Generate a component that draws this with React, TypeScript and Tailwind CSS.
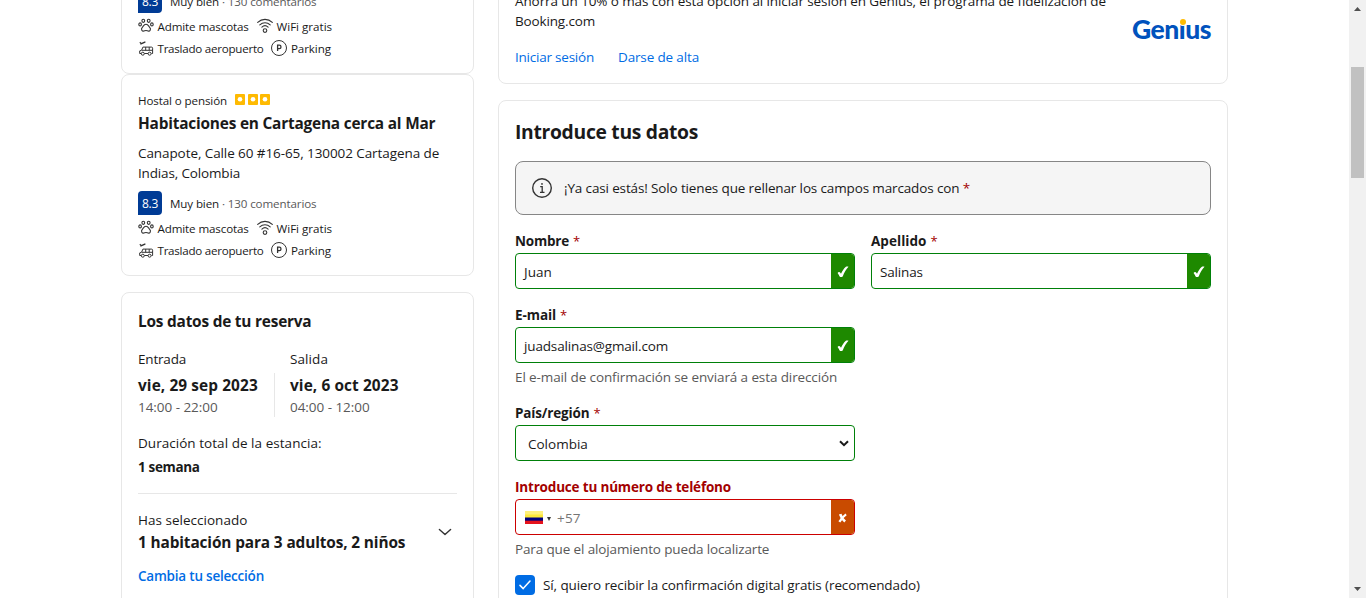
import { ReactNode } from "react";

function PawIcon() {
  return (
    <svg viewBox="0 0 16 16" className="size-4 shrink-0" fill="none" stroke="#333" strokeWidth="1.1">
      <ellipse cx="5.3" cy="2.8" rx="1.4" ry="1.6" />
      <ellipse cx="10.7" cy="2.8" rx="1.4" ry="1.6" />
      <ellipse cx="2.1" cy="6.4" rx="1.3" ry="1.5" />
      <ellipse cx="13.9" cy="6.4" rx="1.3" ry="1.5" />
      <path d="M8 6.3c-1.800 0-2.500 1.500-3.500 2.800-.9 1-1.300 1.900-.8 2.900.6 1.200 2 1.300 3 .8.9-.4 1.700-.4 2.600 0 1 .5 2.400.4 3-.8.5-1 .1-1.900-.8-2.900C10.500 7.800 9.800 6.300 8 6.300z" />
    </svg>
  );
}

function WifiIcon() {
  return (
    <svg viewBox="0 0 16 16" className="size-4 shrink-0" fill="none" stroke="#333" strokeWidth="1.1" strokeLinecap="round">
      <path d="M.7 4.400C5 .4 11 .4 15.300 4.400M2.800 6.800c3-2.800 7.400-2.800 10.400 0M4.900 9.100c1.800-1.700 4.400-1.700 6.200 0" />
      <circle cx="8" cy="12.600" r="1.800" />
    </svg>
  );
}

function ShuttleIcon() {
  return (
    <svg viewBox="0 0 16 16" className="size-4 shrink-0" fill="none" stroke="#333" strokeWidth="1">
      <path d="M1.800 1.300l1.500 1.300L7.400.9M2.400 3.300l4.600-2.200" strokeWidth="1.200" />
      <path d="M3.200 12.500H1.700V9.900l1.900-.7 1.300-3.100h8.600c.7 0 1.100.4 1.100 1.100v5.300h-1.100M6.400 12.500h3.600M3.800 9.300h10.700M7.700 6.100v3.200M11.200 6.100v3.200" />
      <circle cx="4.800" cy="12.700" r="1.500" />
      <circle cx="11.600" cy="12.700" r="1.500" />
    </svg>
  );
}

function ParkingIcon() {
  return (
    <svg viewBox="0 0 16 16" className="size-4 shrink-0" fill="none" stroke="#333">
      <circle cx="8" cy="8" r="7.500" strokeWidth="1" />
      <path d="M6.600 11V5.200h1.700a1.700 1.700 0 0 1 0 3.400H6.600" strokeWidth="1.300" />
    </svg>
  );
}

function Square() {
  return (
    <svg viewBox="0 0 10 11" className="h-[11px] w-[10px]">
      <rect width="10" height="11" rx="1" fill="#feba02" />
      <circle cx="5" cy="5.300" r="2.300" fill="#fff" />
    </svg>
  );
}

function PropertyCard() {
  return (
    <section className="flex h-[202px] shrink-0 flex-col rounded-lg border border-[#e7e7e7] px-4 pt-[17px] text-[#1a1a1a]">
      <div className="flex items-center text-[11.6px] leading-[17px]">
        <span className="w-[97px] tracking-[-0.112px]">Hostal o pensión</span>
        <span className="mb-[2px] flex gap-[2.500px]">
          <Square />
          <Square />
          <Square />
        </span>
      </div>
      <h2 className="mt-[3px] text-[15.4px] leading-[23px] font-bold tracking-[-0.2px] whitespace-nowrap">
        Habitaciones en Cartagena cerca al Mar
      </h2>
      <p className="mt-2 text-[13.5px] leading-5 whitespace-nowrap">
        <span className="tracking-[-0.085px]">Canapote, Calle 60 #16-65, 130002 Cartagena de</span>
        <br />
        <span className="tracking-[-0.155px]">Indias, Colombia</span>
      </p>
      <div className="mt-2 flex h-6 items-center gap-2 text-[11.6px]">
        <span className="flex size-6 items-center justify-center rounded-t-[4px] rounded-br-[4px] bg-[#003b95] pt-px text-[12px] font-medium tracking-[-0.3px] text-white">
          8.3
        </span>
        <span className="leading-[17px] tracking-[-0.12px] whitespace-nowrap">
          Muy bien <span className="text-[#595959]">· 130 comentarios</span>
        </span>
      </div>
      <ul className="mt-[3px] text-[11.6px] leading-[22px] whitespace-nowrap">
        <li className="flex">
          <span className="flex w-[119px] gap-[3.500px]">
            <span className="mt-[2px]"><PawIcon /></span>
            <span className="tracking-[-0.12px]">Admite mascotas</span>
          </span>
          <span className="flex gap-[3.500px]">
            <span className="mt-[2px]"><WifiIcon /></span>
            <span>WiFi gratis</span>
          </span>
        </li>
        <li className="flex">
          <span className="flex w-[133px] gap-[3.500px]">
            <span className="mt-[3px]"><ShuttleIcon /></span>
            <span className="tracking-[-0.251px]">Traslado aeropuerto</span>
          </span>
          <span className="flex gap-[4px]">
            <span className="mt-[2px]"><ParkingIcon /></span>
            <span className="tracking-[-0.1px]">Parking</span>
          </span>
        </li>
      </ul>
    </section>
  );
}

function BookingDetails() {
  return (
    <section className="mt-4 flex h-[340px] shrink-0 flex-col rounded-lg border border-[#e7e7e7] px-4 pt-[17px] text-[13.5px] leading-5 whitespace-nowrap text-[#1a1a1a]">
      <h2 className="text-[15.4px] leading-[23px] font-bold tracking-[-0.21px]">Los datos de tu reserva</h2>
      <div className="mt-4 flex">
        <div className="w-[152px]">
          <p className="font-medium tracking-[-0.196px]">Entrada</p>
          <div className="mt-1 h-11 w-[137px] border-r border-[#e7e7e7] pt-px">
            <p className="text-[15.4px] leading-[23px] font-bold tracking-[0.1px]">vie, 29 sep 2023</p>
            <p className="tracking-[-0.05px] text-[#595959]">14:00 - 22:00</p>
          </div>
        </div>
        <div>
          <p className="font-medium tracking-[0.087px]">Salida</p>
          <div className="mt-1 pt-px">
            <p className="text-[15.4px] leading-[23px] font-bold tracking-[0.1px]">vie, 6 oct 2023</p>
            <p className="tracking-[-0.05px] text-[#595959]">04:00 - 12:00</p>
          </div>
        </div>
      </div>
      <p className="mt-4 font-medium tracking-[0.04px]">Duración total de la estancia:</p>
      <p className="mt-1 font-bold tracking-[-0.35px]">1 semana</p>
      <hr className="mt-4 border-[#e7e7e7]" />
      <div className="mt-4 flex items-center justify-between">
        <div>
          <p className="font-medium tracking-[0.02px]">Has seleccionado</p>
          <p className="mt-px text-[15.4px] leading-[23px] font-bold tracking-[-0.13px]">
            1 habitación para 3 adultos, 2 niños
          </p>
        </div>
        <svg viewBox="0 0 14 8" className="mr-[5px] h-2 w-[14px]" fill="none" stroke="#333" strokeWidth="1.400" strokeLinecap="round" strokeLinejoin="round">
          <path d="M1.400 1.400L7 6.600l5.600-5.200" />
        </svg>
      </div>
      <a className="mt-3 font-semibold tracking-[-0.215px] text-[#006ce4]">Cambia tu selección</a>
    </section>
  );
}

function Label({ children }: { children: ReactNode }) {
  return (
    <div className="flex gap-1 font-bold">
      {children}
      <span className="text-[13px] font-medium text-[#a30000]">*</span>
    </div>
  );
}

function ValidInput({ children }: { children: ReactNode }) {
  return (
    <div className="mt-[2px] flex h-9 overflow-hidden rounded-[4px] border border-[#008009]">
      <div className="flex flex-1 items-center pt-px pl-2">{children}</div>
      <div className="flex w-[23px] items-center justify-center bg-[#1e8900] pt-[2px]">
        <svg viewBox="0 0 12 12" className="size-3" fill="#fff">
          <path d="M.6 7c.5-1 2-1.300 2.700-.3l.7 1C5.300 4.800 6.800 2.500 8.600.9c.6-.5 2.300-.5 2.900-.2C9.200 3.200 7.200 6.500 5.800 10.200c-.4 1-2.700 1.200-3.200.2C2 9.200 1.500 8.200.6 7z" />
        </svg>
      </div>
    </div>
  );
}

function GeniusBanner() {
  return (
    <section className="mt-[-26px] flex h-[110px] shrink-0 justify-between rounded-lg border border-[#e7e7e7] px-4 pt-4 whitespace-nowrap">
      <div>
        <p>
          <span className="tracking-[-0.101px]">
            Ahorra un 10% o más con esta opción al iniciar sesión en Genius, el programa de fidelización de
          </span>
          <br />
          <span className="tracking-[-0.155px]">Booking.com</span>
        </p>
        <div className="mt-4 flex text-[#006ce4]">
          <a className="w-[103px] tracking-[-0.222px]">Iniciar sesión</a>
          <a className="tracking-[-0.147px]">Darse de alta</a>
        </div>
      </div>
      <div className="relative mt-[22px] h-8 w-[79px] font-[Lato,sans-serif] text-[26.500px] leading-8 font-black tracking-[-0.5px] text-[#0052bd]">
        Genius
        <span className="absolute top-[6px] left-[48px] size-[6px] rounded-full bg-[#feba02] ring-1 ring-white" />
      </div>
    </section>
  );
}

function DetailsForm() {
  return (
    <section className="mt-4 flex h-[600px] shrink-0 flex-col rounded-lg border border-[#e7e7e7] px-4 pt-[17px] whitespace-nowrap">
      <h1 className="text-[19.3px] leading-[27px] font-bold tracking-[-0.299px]">Introduce tus datos</h1>
      <div className="mt-4 flex h-[54px] items-center gap-3 rounded-lg border border-[#868686] bg-[#f5f5f5] px-4">
        <svg viewBox="0 0 20 20" className="size-5" fill="none" stroke="#333" strokeWidth="1.400">
          <circle cx="10" cy="10" r="9.300" />
          <path d="M8.200 8.700h2v5.400M8 14.300h4.500" strokeWidth="1.300" />
          <circle cx="10" cy="5.900" r=".9" fill="#333" stroke="none" />
        </svg>
        <p>
          <span className="tracking-[-0.140px]">¡Ya casi estás! Solo tienes que rellenar los campos marcados con </span>
          <span className="text-[#a30000]">*</span>
        </p>
      </div>
      <div className="mt-4 grid grid-cols-2 gap-4">
        <div>
          <Label><span className="tracking-[-0.207px]">Nombre</span></Label>
          <ValidInput>Juan</ValidInput>
        </div>
        <div>
          <Label><span className="tracking-[0.05px]">Apellido</span></Label>
          <ValidInput><span className="tracking-[-0.15px]">Salinas</span></ValidInput>
        </div>
      </div>
      <div className="mt-4 w-[340px]">
        <Label><span className="tracking-[-0.092px]">E-mail</span></Label>
        <ValidInput><span className="tracking-[-0.150px]">juadsalinas@gmail.com</span></ValidInput>
        <p className="mt-1 tracking-[-0.11px] text-[#595959]">El e-mail de confirmación se enviará a esta dirección</p>
      </div>
      <div className="mt-4 w-[340px]">
        <Label><span className="tracking-[-0.15px]">País/región</span></Label>
        <div className="mt-[2px] flex h-9 items-center justify-between rounded-[4px] border border-[#008009] pt-px pr-[5px] pl-3">
          Colombia
          <svg viewBox="0 0 10 7" className="mb-px h-[7px] w-[10px]" fill="none" stroke="#1a1a1a" strokeWidth="2">
            <path d="M1 1.200l4 4 4-4" />
          </svg>
        </div>
      </div>
      <div className="mt-4 w-[340px]">
        <div className="font-bold tracking-[-0.178px] text-[#a30000]">Introduce tu número de teléfono</div>
        <div className="mt-[2px] flex h-9 overflow-hidden rounded-[4px] border border-[#cc0000]">
          <div className="flex flex-1 items-center pt-px pl-[9px]">
            <svg viewBox="0 0 18 13" className="h-[13px] w-[18px]">
              <rect width="18" height="7" fill="#fce83a" />
              <rect width="18" height="3.500" fill="#fff07c" />
              <rect y="6.500" width="18" height="3.500" fill="#00007e" />
              <rect y="9.700" width="18" height="3.300" fill="#e5121c" />
            </svg>
            <svg viewBox="0 0 4 4" className="mt-[2px] ml-1 size-1" fill="#333">
              <path d="M0 0h4L2 4z" />
            </svg>
            <span className="ml-[6px] tracking-[0.2px] text-[#757575]">+57</span>
          </div>
          <div className="flex w-[23px] items-center justify-center bg-[#c94b00] pt-px">
            <svg viewBox="0 0 10 11" className="h-[10px] w-[9px]" fill="none" stroke="#fff">
              <path d="M2.400 1.200c1 3.100 2.700 5.900 5.500 8.200" strokeWidth="3" />
              <path d="M9 1.500C6 3.600 3.500 6.300 1.500 9.800" strokeWidth="2.400" />
            </svg>
          </div>
        </div>
        <p className="mt-1 tracking-[-0.135px] text-[#595959]">Para que el alojamiento pueda localizarte</p>
      </div>
      <div className="mt-4 flex gap-2">
        <span className="flex size-5 items-center justify-center rounded-[4px] bg-[#006ce4]">
          <svg viewBox="0 0 12 10" className="h-[10px] w-3" fill="none" stroke="#fff" strokeWidth="1.500" strokeLinecap="round" strokeLinejoin="round">
            <path d="M1 5.400l3.200 3.200L11 1" />
          </svg>
        </span>
        <span className="tracking-[-0.095px]">Sí, quiero recibir la confirmación digital gratis (recomendado)</span>
      </div>
    </section>
  );
}

export default function App() {
  return (
    <div className="flex h-[598px] overflow-hidden bg-white font-['Open_Sans',sans-serif] text-[13.5px] leading-5 text-[#1a1a1a]">
      <main className="flex flex-1 gap-6 overflow-hidden pl-[121px]">
        <aside className="mt-[-128px] flex w-[353px] flex-col">
          <PropertyCard />
          <PropertyCard />
          <BookingDetails />
        </aside>
        <div className="flex w-[730px] flex-col">
          <GeniusBanner />
          <DetailsForm />
        </div>
      </main>
      <div className="flex w-[17px] flex-col items-center justify-between bg-[#f1f1f1] py-[7px]">
        <svg viewBox="0 0 7 4" className="h-1 w-[7px]" fill="#505050"><path d="M0 4h7L3.500 0z" /></svg>
        <div className="mt-[56px] mb-auto h-[111px] w-[13px] bg-[#c1c1c1]" />
        <svg viewBox="0 0 7 4" className="h-1 w-[7px]" fill="#505050"><path d="M0 0h7L3.500 4z" /></svg>
      </div>
    </div>
  );
}
